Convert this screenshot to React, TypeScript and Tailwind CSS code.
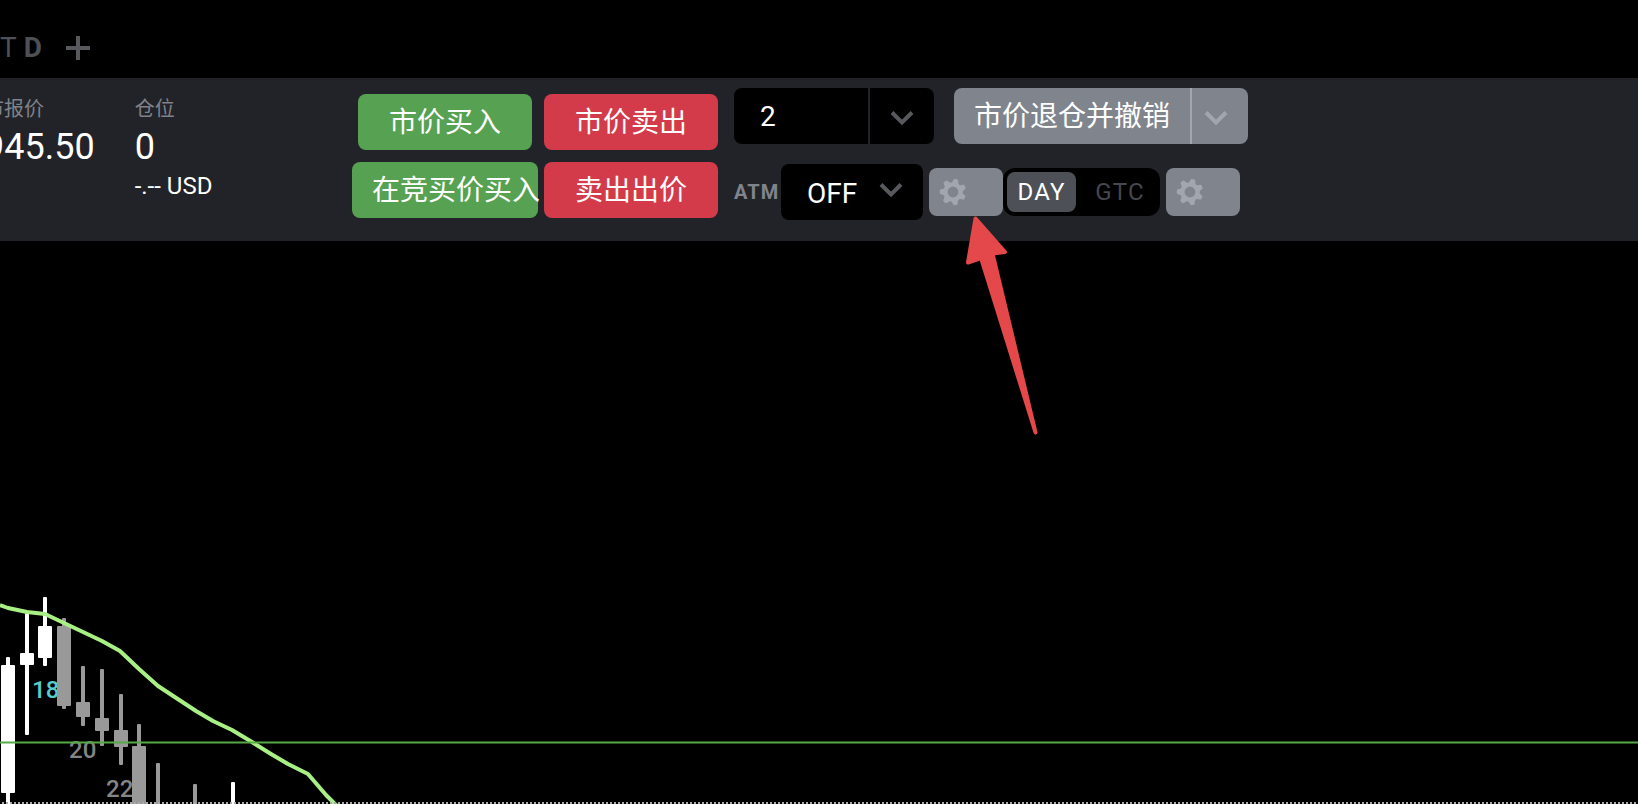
import { useState } from "react";

type Candle = {
  x: number;
  high: number;
  low: number;
  top?: number;
  bottom?: number;
  up?: boolean;
};

const candles: Candle[] = [
  { x: 8, high: 416, low: 570, top: 424, bottom: 552, up: true },
  { x: 27, high: 372, low: 494, top: 412, bottom: 424, up: true },
  { x: 45, high: 356, low: 425, top: 385, bottom: 417, up: true },
  { x: 64, high: 377, low: 468, top: 385, bottom: 465 },
  { x: 83, high: 425, low: 485, top: 461, bottom: 476 },
  { x: 102, high: 428, low: 505, top: 477, bottom: 490 },
  { x: 121, high: 453, low: 524, top: 489, bottom: 506 },
  { x: 139, high: 483, low: 570, top: 505, bottom: 570 },
  { x: 158, high: 522, low: 570 },
  { x: 195, high: 543, low: 570 },
  { x: 233, high: 541, low: 570, up: true },
];

const average =
  "0,364 8,367 27,371 45,373 64,382 83,391 102,400 120,410 139,428 158,445 196,470 213,480 232,489 252,501 271,513 288,523 308,533 326,554 345,573";

const barLabels = [
  { text: "18", x: 32, y: 457, className: "fill-[#58cccd]" },
  { text: "20", x: 69, y: 517, className: "fill-[#858585]" },
  { text: "22", x: 106, y: 556, className: "fill-[#858585]" },
];

function Chevron({ className }: { className?: string }) {
  return (
    <svg width="24" height="16" viewBox="0 0 24 16" fill="none" className={className} aria-hidden="true">
      <path d="M2 2.5 12 12.5 22 2.5" stroke="currentColor" strokeWidth="4" />
    </svg>
  );
}

function Gear() {
  const teeth = [0, 1, 2, 3, 4, 5, 6];
  return (
    <svg width="28" height="28" viewBox="-14 -14 28 28" aria-hidden="true">
      <circle r="7.4" fill="none" stroke="currentColor" strokeWidth="4" />
      {teeth.map((i) => (
        <path
          key={i}
          d="M-4.6 -7.8Q-2.6 -9.4 -2.4 -12Q-2.2 -13.2 -1.2 -13.2L1.2 -13.2Q2.2 -13.2 2.4 -12Q2.6 -9.4 4.6 -7.8Z"
          fill="currentColor"
          transform={`rotate(${14 + (i * 360) / 7})`}
        />
      ))}
    </svg>
  );
}

function SettingsButton({ label }: { label: string }) {
  return (
    <button
      aria-label={label}
      className="flex h-12 w-[74px] items-center rounded-lg bg-[#80848c] pl-[10px] text-[#a2a6ae]"
    >
      <Gear />
    </button>
  );
}

function Stat({ label, value, note }: { label: string; value: string; note?: string }) {
  return (
    <div className="whitespace-nowrap">
      <p className="text-xl leading-7 text-[#7f828a]">{label}</p>
      <p className="text-4xl leading-[48px]">{value}</p>
      {note && <p className="text-2xl leading-[30px]">{note}</p>}
    </div>
  );
}

function Chart() {
  return (
    <svg className="min-h-[563px] w-full flex-1" role="img" aria-label="K线图">
      {barLabels.map((label) => (
        <text key={label.text} x={label.x} y={label.y} className={`text-2xl font-medium ${label.className}`}>
          {label.text}
        </text>
      ))}
      {candles.map((c) => (
        <g key={c.x} className={c.up ? "fill-white" : "fill-[#999]"}>
          <rect x={c.x - 2} y={c.high} width="4" height={c.low - c.high} rx="1" />
          {c.top !== undefined && c.bottom !== undefined && (
            <rect x={c.x - 7} y={c.top} width="14" height={c.bottom - c.top} rx="1" />
          )}
        </g>
      ))}
      <polyline points={average} fill="none" stroke="#a9f084" strokeWidth="4" strokeLinejoin="round" />
      <line x1="0" x2="100%" y1="501.5" y2="501.5" stroke="#57a846" strokeWidth="2" />
      <line x1="2" x2="100%" y1="562" y2="562" stroke="#aaa" strokeWidth="2" strokeDasharray="2 2" />
    </svg>
  );
}

export default function App() {
  const [quantity, setQuantity] = useState("2");
  const [tif, setTif] = useState("DAY");

  return (
    <div className="flex min-h-screen flex-col overflow-hidden bg-black font-[Roboto,'Noto_Sans_CJK_SC',sans-serif] text-white">
      {/* Tabs */}
      <header className="flex h-[78px] items-center gap-6 pt-[18px]">
        <p className="flex gap-[7px] text-[28px] leading-8 text-[#4d5157]">
          <span>T</span>
          <span className="font-bold">D</span>
        </p>
        <button aria-label="添加" className="text-[#58595d]">
          <svg width="24" height="24" viewBox="0 0 24 24" aria-hidden="true">
            <path d="M12 0v24M0 12h24" stroke="currentColor" strokeWidth="4" />
          </svg>
        </button>
      </header>

      {/* Order toolbar */}
      <section className="relative flex h-[163px] items-start bg-[#222328]">
        <div className="flex w-[352px] shrink-0 gap-10 pt-[17px]">
          <div className="-ml-4">
            <Stat label="市报价" value="945.50" />
          </div>
          <Stat label="仓位" value="0" note="-.-- USD" />
        </div>

        <div className="grid shrink-0 grid-cols-[186px_174px] gap-x-[6px] gap-y-3 pt-4 text-[28px] leading-8 whitespace-nowrap">
          <button className="mx-[6px] h-14 rounded-lg bg-[#57a153] pt-0.5">市价买入</button>
          <button className="h-14 rounded-lg bg-[#d33b4a] pt-0.5">市价卖出</button>
          <button className="h-14 rounded-lg bg-[#57a153] pt-0.5 pl-5 text-left">在竞买价买入</button>
          <button className="h-14 rounded-lg bg-[#d33b4a] pt-0.5">卖出出价</button>
        </div>

        <div className="ml-4 flex shrink-0 flex-col gap-5 pt-[10px]">
          <div className="flex gap-5">
            <div className="flex h-14 w-[200px] overflow-hidden rounded-lg bg-black">
              <input
                aria-label="数量"
                value={quantity}
                onChange={(e) => setQuantity(e.target.value)}
                className="w-[134px] bg-transparent pt-0.5 pl-[26px] text-[28px] outline-none"
              />
              <button
                aria-label="选择数量"
                className="flex flex-1 items-center justify-center border-l-2 border-[#222328] pt-1 text-[#58595d]"
              >
                <Chevron />
              </button>
            </div>
            <div className="flex h-14 w-[294px] overflow-hidden rounded-lg bg-[#80848c]">
              <button className="w-[236px] pt-0.5 pl-5 text-left text-[28px] whitespace-nowrap">市价退仓并撤销</button>
              <button
                aria-label="更多退仓选项"
                className="flex flex-1 items-center border-l-2 border-[#a2a6ae] pt-1 pl-3 text-[#a2a6ae]"
              >
                <Chevron />
              </button>
            </div>
          </div>

          <div className="flex items-center">
            <label htmlFor="atm" className="w-[47px] text-xl font-bold tracking-wider text-[#80848c]">
              ATM
            </label>
            <div className="relative">
              <select
                id="atm"
                className="h-14 w-[142px] appearance-none rounded-lg bg-black pt-1 pl-[26px] text-[28px] outline-none"
              >
                <option>OFF</option>
              </select>
              <Chevron className="pointer-events-none absolute top-[18px] right-5 text-[#58595d]" />
            </div>
            <div className="ml-[6px] flex items-center">
              <SettingsButton label="ATM 设置" />
              <div className="mr-[6px] flex h-12 w-[157px] gap-2 rounded-xl bg-black p-1 text-2xl tracking-wider">
                {["DAY", "GTC"].map((option) => (
                  <button
                    key={option}
                    aria-pressed={tif === option}
                    onClick={() => setTif(option)}
                    className={`rounded-lg ${
                      tif === option ? "w-[69px] bg-[#4d5157] text-white" : "flex-1 text-[#45484e]"
                    }`}
                  >
                    {option}
                  </button>
                ))}
              </div>
              <SettingsButton label="委托设置" />
            </div>
          </div>
        </div>

        {/* Pointer arrow over the chart */}
        <svg
          width="80"
          height="230"
          viewBox="0 0 80 230"
          className="pointer-events-none absolute top-[134px] left-[960px]"
          aria-hidden="true"
        >
          <path
            d="M15.5 6.5 45 40 32.5 41.5 75.5 220.5 21 46 8 50.5Z"
            fill="#e5484a"
            stroke="#e5484a"
            strokeWidth="4"
            strokeLinejoin="round"
          />
        </svg>
      </section>

      {/* Chart */}
      <main className="flex flex-1 flex-col">
        <Chart />
      </main>
    </div>
  );
}
